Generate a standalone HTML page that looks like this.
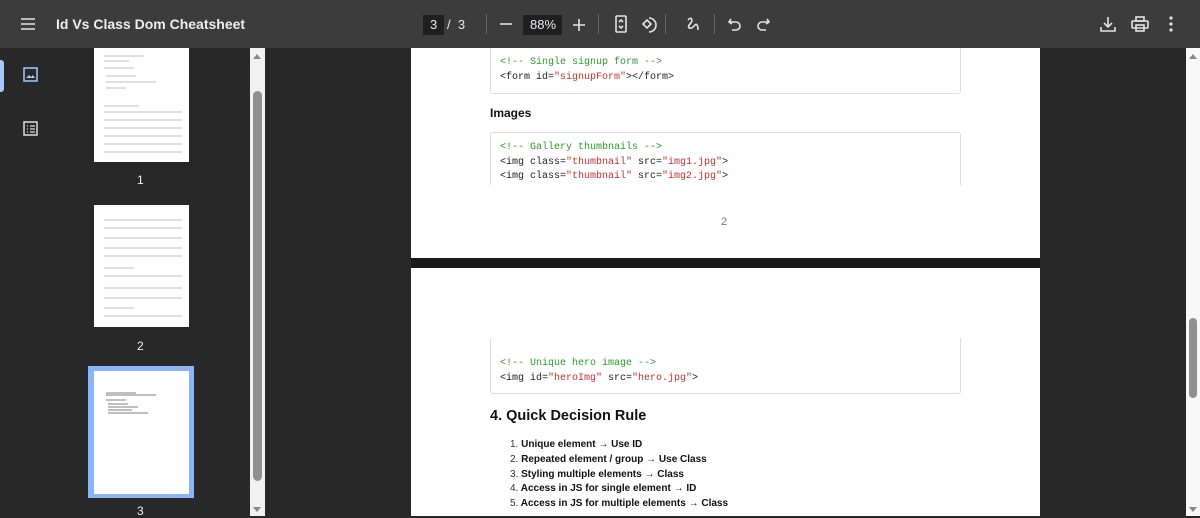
<!DOCTYPE html>
<html><head><meta charset="utf-8"><style>
*{margin:0;padding:0;box-sizing:border-box}
body{width:1200px;height:516px;overflow:hidden;background:#282828;font-family:"Liberation Sans",sans-serif;position:relative}
.abs{position:absolute}
.tb{left:0;top:0;width:1200px;height:48px;background:#3c3c3c;color:#e8eaed;z-index:5}
.ic{stroke:#e3e3e3;fill:none;stroke-width:1.6}
.mono{font-family:"Liberation Mono",monospace;font-size:10px;color:#222;line-height:14.5px;white-space:pre}
.c{color:#2a9a2a}.s{color:#c0312c}
.box{border:1px solid #ddd;border-radius:3px;background:#fff}
.sans{font-family:"Liberation Sans",sans-serif}
.li{font-size:10px;font-weight:bold;color:#111;line-height:14.8px}
.li span{font-weight:normal;color:#333}
</style></head><body>
<div class="abs tb">
 <svg class="abs" style="left:20px;top:17px" width="16" height="14"><path d="M1 2h14M1 7h14M1 12h14" class="ic" stroke-width="1.8"/></svg>
 <div class="abs" style="left:56px;top:16px;font-size:14px;font-weight:bold;color:#eee">Id Vs Class Dom Cheatsheet</div>
 <div class="abs" style="left:423px;top:15px;width:21px;height:20px;background:#1f1f1f"></div>
 <div class="abs" style="left:430px;top:17px;font-size:13px">3</div>
 <div class="abs" style="left:447px;top:17px;font-size:13px">/&nbsp;&nbsp;3</div>
 <div class="abs" style="left:486px;top:14px;width:1px;height:20px;background:#666"></div>
 <svg class="abs" style="left:499px;top:18px" width="14" height="12"><path d="M1 6h12" class="ic" stroke-width="2"/></svg>
 <div class="abs" style="left:523px;top:15px;width:39px;height:20px;background:#1f1f1f"></div>
 <div class="abs" style="left:530px;top:17px;font-size:13px">88%</div>
 <svg class="abs" style="left:572px;top:18px" width="14" height="14"><path d="M1 7h12M7 1v12" class="ic" stroke-width="2"/></svg>
 <div class="abs" style="left:598px;top:14px;width:1px;height:20px;background:#666"></div>
 <svg class="abs" style="left:614px;top:15px" width="14" height="19"><rect x="2" y="1" width="10" height="16" rx="1" class="ic"/><path d="M5 7l2-2 2 2M5 11l2 2 2-2" class="ic" stroke-width="1.2"/></svg>
 <svg class="abs" style="left:640px;top:15px" width="20" height="19"><path d="M3 9l4-4 4 4-4 4z" class="ic"/><path d="M9 3a7 7 0 1 1 0 14" class="ic"/></svg>
 <div class="abs" style="left:665px;top:14px;width:1px;height:20px;background:#666"></div>
 <svg class="abs" style="left:686px;top:15px" width="16" height="18"><path d="M2 5c3-4 6 0 2 4s1 6 4 2 4 0 4 4" class="ic"/></svg>
 <div class="abs" style="left:714px;top:14px;width:1px;height:20px;background:#666"></div>
 <svg class="abs" style="left:728px;top:17px" width="14" height="14"><path d="M3 2L1 5l3 2M1 5h7a4 4 0 0 1 0 8H4" class="ic" stroke="#888"/></svg>
 <svg class="abs" style="left:756px;top:17px" width="14" height="14"><path d="M11 2l2 3-3 2M13 5H6a4 4 0 0 0 0 8h4" class="ic" stroke="#888"/></svg>
 <svg class="abs" style="left:1099px;top:15px" width="18" height="18"><path d="M9 2v10M5 8l4 4 4-4M2 12v4h14v-4" class="ic"/></svg>
 <svg class="abs" style="left:1131px;top:15px" width="18" height="18"><rect x="1" y="6" width="16" height="7" rx="1" class="ic"/><rect x="5" y="2" width="8" height="4" class="ic"/><rect x="5" y="10" width="8" height="6" class="ic" fill="#3c3c3c"/></svg>
 <svg class="abs" style="left:1168px;top:16px" width="6" height="16"><circle cx="3" cy="2" r="1.6" fill="#e3e3e3"/><circle cx="3" cy="8" r="1.6" fill="#e3e3e3"/><circle cx="3" cy="14" r="1.6" fill="#e3e3e3"/></svg>
</div>
<div class="abs" style="left:0;top:60px;width:4px;height:32px;background:#a8c7fa;border-radius:0 3px 3px 0"></div>
<svg class="abs" style="left:23px;top:67px" width="15" height="15"><rect x="1" y="1" width="13" height="13" fill="none" stroke="#a8c7fa" stroke-width="1.5"/><path d="M3 11l3-3 2 2 2-2 2 3z" fill="#a8c7fa"/></svg>
<svg class="abs" style="left:23px;top:121px" width="15" height="15"><rect x="1" y="1" width="13" height="13" fill="none" stroke="#ddd" stroke-width="1.5"/><path d="M4 5h1M7 5h5M4 8h1M7 8h5M4 11h1M7 11h5" stroke="#ddd" stroke-width="1.3"/></svg>
<div class="abs" style="left:94px;top:48px;width:95px;height:114px;background:#fff"></div>
<div class="abs" style="left:94px;top:205px;width:95px;height:122px;background:#fff"></div>
<div class="abs" style="left:88px;top:366px;width:106px;height:132px;background:#8ab4f8"></div>
<div class="abs" style="left:94px;top:371px;width:95px;height:123px;background:#fff"></div>
<svg class="abs" style="left:94px;top:48px" width="95" height="450">
<g stroke="#aaa" stroke-width="0.8">
<path d="M10 8h40M10 13h25M10 20h30M12 28h30M12 34h50M12 40h20M10 58h35M10 64h78M10 72h78M10 80h78M10 88h78M10 96h78M10 104h78"/>
<path d="M10 172h78M10 180h78M10 190h78M10 200h78M10 208h78M10 220h30M10 228h78M10 240h78M10 250h78M10 260h30M10 268h78"/>
<path d="M12 345h30M12 347h50M12 352h20M14 356h20M14 359h30M14 362h24M14 365h40" stroke="#555"/>
</g></svg>
<div class="abs" style="left:137px;top:173px;color:#eee;font-size:12px">1</div>
<div class="abs" style="left:137px;top:339px;color:#eee;font-size:12px">2</div>
<div class="abs" style="left:137px;top:504px;color:#eee;font-size:12px">3</div>
<div class="abs" style="left:250px;top:48px;width:15px;height:468px;background:#f1f1f1"></div>
<div class="abs" style="left:253px;top:91px;width:9px;height:390px;background:#909090;border-radius:5px"></div>
<div class="abs" style="left:253px;top:54px;width:0;height:0;border:4px solid transparent;border-bottom:5px solid #888;border-top:0"></div>
<div class="abs" style="left:253px;top:507px;width:0;height:0;border:4px solid transparent;border-top:5px solid #888;border-bottom:0"></div>
<div class="abs" style="left:1186px;top:48px;width:14px;height:468px;background:#f8f8f8"></div>
<div class="abs" style="left:1189px;top:318px;width:8px;height:80px;background:#909090;border-radius:4px"></div>
<div class="abs" style="left:1189px;top:54px;border:4px solid transparent;border-bottom:5px solid #888;border-top:0"></div>
<div class="abs" style="left:1189px;top:507px;border:4px solid transparent;border-top:5px solid #888;border-bottom:0"></div>
<div class="abs" style="left:411px;top:48px;width:629px;height:210px;background:#fff"></div>
<div class="abs" style="left:411px;top:258px;width:629px;height:10px;background:#1a1a1a"></div>
<div class="abs" style="left:411px;top:268px;width:629px;height:248px;background:#fff"></div>
<div class="abs box" style="left:490px;top:40px;width:471px;height:54px"></div>
<div class="abs mono" style="left:500px;top:56px"><span class="c">&lt;!-- Single signup form --&gt;</span>
&lt;form id=<span class="s">"signupForm"</span>&gt;&lt;/form&gt;</div>
<div class="abs sans" style="left:490px;top:106px;font-size:12px;font-weight:bold;color:#111">Images</div>
<div class="abs box" style="left:490px;top:132px;width:471px;height:60px;border-bottom:none;border-radius:3px 3px 0 0"></div>
<div class="abs" style="left:411px;top:185px;width:629px;height:20px;background:#fff"></div>
<div class="abs mono" style="left:500px;top:141px"><span class="c">&lt;!-- Gallery thumbnails --&gt;</span>
&lt;img class=<span class="s">"thumbnail"</span> src=<span class="s">"img1.jpg"</span>&gt;
&lt;img class=<span class="s">"thumbnail"</span> src=<span class="s">"img2.jpg"</span>&gt;</div>
<div class="abs sans" style="left:721px;top:216px;font-size:11px;color:#777">2</div>
<div class="abs box" style="left:490px;top:338px;width:471px;height:56px;border-top:none;border-radius:0 0 3px 3px"></div>
<div class="abs mono" style="left:500px;top:357px"><span class="c">&lt;!-- Unique hero image --&gt;</span>
&lt;img id=<span class="s">"heroImg"</span> src=<span class="s">"hero.jpg"</span>&gt;</div>
<div class="abs sans" style="left:490px;top:408px;font-size:14.5px;font-weight:bold;color:#111">4. Quick Decision Rule</div>
<div class="abs sans li" style="left:510px;top:438px">
<div><span>1.</span> Unique element → Use ID</div>
<div><span>2.</span> Repeated element / group → Use Class</div>
<div><span>3.</span> Styling multiple elements → Class</div>
<div><span>4.</span> Access in JS for single element → ID</div>
<div><span>5.</span> Access in JS for multiple elements → Class</div>
</div>
</body></html>
